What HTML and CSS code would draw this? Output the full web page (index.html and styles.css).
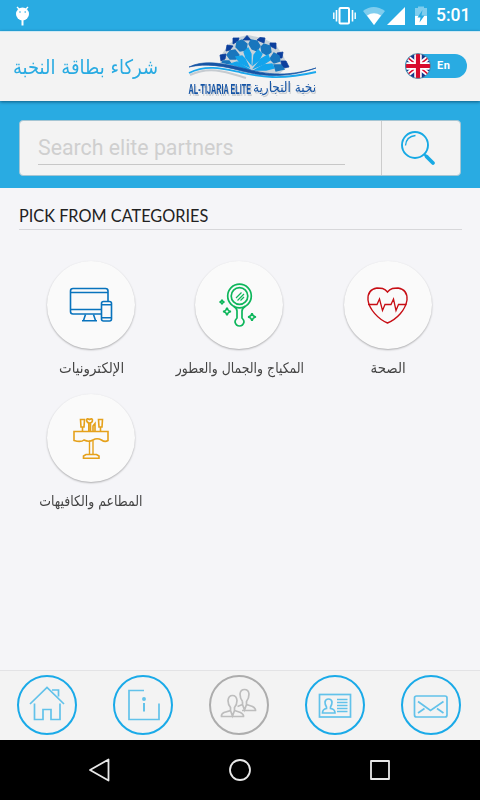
FILE: index.html
```
<!DOCTYPE html>
<html lang="en">
<head>
    <meta charset="UTF-8">
    <meta name="viewport" content="width=device-width, initial-scale=1.0">
    <title>Al-Tijaria Elite</title>
    <link rel="stylesheet" href="styles.css">
</head>
<body>
    <div class="status-bar">
        <svg class="debug-icon" width="20" height="31" viewBox="0 0 20 31">
            <path d="M4 7 L6.5 9.5 M15 7 L12.5 9.5" stroke="#fff" stroke-width="1.4"/>
            <circle cx="9.5" cy="14" r="6.5" fill="#fff"/>
            <path d="M9.5 20V25.5" stroke="#fff" stroke-width="2"/>
            <circle cx="7" cy="12" r=".8" fill="#29abe2"/>
            <circle cx="12.2" cy="12" r=".8" fill="#29abe2"/>
        </svg>
        <svg class="system-icons" width="98" height="31" viewBox="332 0 98 31">
            <g fill="none" stroke="#fff">
                <rect x="339.5" y="8" width="9.5" height="15.5" rx="1" stroke-width="2"/>
                <path d="M336.5 10V21.5M352.5 10V21.5" stroke-width="1.6"/>
                <path d="M333.8 12.5V19M355.2 12.5V19" stroke-width="1.4"/>
            </g>
            <path d="M363 11 Q373.500 3 385 11 L374 25Z" fill="#7fcdee"/>
            <path d="M367 15.500 Q374 11 381 15.500 L374 25Z" fill="#fff"/>
            <path d="M387 25 L405 7V25Z" fill="#fff"/>
            <path d="M415 8H418V6.500H424V8H427V16H415Z" fill="#7fcdee"/>
            <path d="M415 16H427V25H415Z" fill="#fff"/>
            <path d="M422.500 10L417.500 17.500H420.500L419.500 22.500L424.500 15.500H421.500Z" fill="#29abe2"/>
        </svg>
        <span class="clock">5:01</span>
    </div>

    <div class="header">
        <h1 class="title" dir="rtl" lang="ar">شركاء بطاقة النخبة</h1>
        <svg class="logo" width="134" height="69" viewBox="186 31 134 69">
            <path d="M219 65 L222 53 L229 43 L239 36 L248 34 L262 37 L275 43 L283 54 L288 66 L279 73 L250 71Z" fill="#c8d2da"/>
            <g fill="#0c3f9d" stroke="#0c3f9d" stroke-width=".8">
                <path d="M247 34.500L251 39H243Z"/>
                <path d="M233 37L239 37L238 40L233 43Z"/>
                <path d="M227 44L233 45L230 49L226 50Z"/>
                <path d="M220 54L226 53L225 58L221 60Z"/>
                <path d="M260 36.500L265 37L264 42L257 39Z"/>
                <path d="M270 42L276 42L276 48L270 45Z"/>
                <path d="M277 52L283 51L282 57L278 57Z"/>
                <path d="M281 60L286 60L289 66L282 67Z"/>
            </g>
            <g fill="#1976bd" stroke="#1976bd" stroke-width="1.300">
                <path d="M242 39L247 43L246 49L240 50L236 46L237 41Z"/>
                <path d="M251 39L257 40L260 45L257 50L252 48L249 43Z"/>
                <path d="M230 50L235 49L239 54L236 58L230 58L227 54Z"/>
                <path d="M264 43L270 45L271 51L267 54L262 51L261 46Z"/>
                <path d="M274 52L279 55L280 60L274 62L270 58Z"/>
                <path d="M223 60L229 60L232 64L228 66L221 64Z"/>
                <path d="M274 64L281 64L284 68L276 70Z"/>
            </g>
            <g fill="#13a4ec" stroke="#13a4ec" stroke-width="1.300">
                <path d="M248 47L251 53L251 63L246 57L244 51Z"/>
                <path d="M258 49L262 53L259 59L253 64L254 54Z"/>
                <path d="M236 56L242 55L245 58L249 66L240 62Z"/>
                <path d="M268 54L270 59L264 63L254 67L261 58Z"/>
                <path d="M230 63L237 61L249 68L237 68Z"/>
                <path d="M272 63L274 67L266 69L255 69L264 64Z"/>
            </g>
            <path d="M188 66C202 57 218 61 235 65S281 83 319 68V76C280 83 259 76 240 72S206 65 190 72Z" fill="#f3f3f3"/>
            <g fill="none">
                <path d="M190 74C211 64 229 72 246 77" stroke="#c6cbd0" stroke-width="2"/>
                <path d="M189 72C207 63 224 68 241 71.500S277 80 316 71" stroke="#1ba8ed" stroke-width="1.800"/>
            </g>
            <path d="M189 66C203 59 220 62 238 66S278 79 316 67C283 79 257 74 240 69.500S207 62 189 66Z" fill="#1554a5" stroke="#1554a5" stroke-width=".7"/>
            <text class="logo-latin" x="188.500" y="93" textLength="62.500" lengthAdjust="spacingAndGlyphs">AL-TIJARIA ELITE</text>
            <text class="logo-arabic" x="253" y="91" textLength="63" lengthAdjust="spacingAndGlyphs">نخبة التجارية</text>
        </svg>
        <div class="language">
            <svg class="flag" width="26" height="26" viewBox="0 0 26 26">
                <clipPath id="flag-clip"><circle cx="13" cy="13" r="12.300"/></clipPath>
                <g clip-path="url(#flag-clip)">
                    <rect width="26" height="26" fill="#17368c"/>
                    <path d="M-3 0L29 26M29 0L-3 26" stroke="#fff" stroke-width="5"/>
                    <path d="M-3 0L29 26M29 0L-3 26" stroke="#d80b2d" stroke-width="1.600"/>
                    <path d="M13 0V26M0 13H26" stroke="#fff" stroke-width="7.500"/>
                    <path d="M13 0V26M0 13H26" stroke="#d80b2d" stroke-width="4.200"/>
                </g>
                <circle cx="13" cy="13" r="12.500" fill="none" stroke="#50819b" stroke-width=".8"/>
            </svg>
            <span>En</span>
        </div>
    </div>

    <div class="search">
        <div class="search-box">
            <div class="search-field">
                <input type="text" class="search-input" placeholder="Search elite partners">
            </div>
            <button class="search-button">
                <svg width="36" height="36" viewBox="0 0 36 36" fill="none" stroke="#17a9e4">
                    <circle cx="15" cy="15" r="13" stroke-width="1.900"/>
                    <path d="M5.500 15.500C6 9.500 10 6 15.500 5.500" stroke-width="1.300"/>
                    <path d="M24 24L26.500 26.500" stroke-width="2"/>
                    <path d="M26.500 26.500L33 33" stroke-width="3.800" stroke-linecap="round"/>
                </svg>
            </button>
        </div>
    </div>

    <div class="content">
        <h2 class="section-title">PICK FROM CATEGORIES</h2>
        <div class="categories">
            <div class="category">
                <div class="circle">
                    <svg width="88" height="88" viewBox="0 0 88 88" fill="none" stroke="#0873bd" stroke-width="1.600">
                        <path d="M54 53H26Q23.500 53 23.500 50.500V30Q23.500 27.500 26 27.500H58.500Q61 27.500 61 30V40M23.500 31.500H61M23.500 48.500H54"/>
                        <path d="M38.500 53.500L36.500 59.500M46.500 53.500L48.500 59.500M35 59.700H50"/>
                        <rect x="54.500" y="40.500" width="10" height="19.500" rx="2"/>
                        <path d="M54.500 43.700H64.500M54.500 56.700H64.500"/>
                    </svg>
                </div>
                <span class="label label-electronics" dir="rtl" lang="ar">الإلكترونيات</span>
            </div>
            <div class="category">
                <div class="circle">
                    <svg width="88" height="88" viewBox="0 0 88 88" fill="none" stroke="#0db65b" stroke-width="1.700">
                        <circle cx="44.500" cy="35" r="11.800"/>
                        <circle cx="44.500" cy="35" r="8.300"/>
                        <path d="M41 37L46.500 31.500M42.500 39.500L49 33M45.500 39.500L49 36" stroke-width="1.200"/>
                        <path d="M38.500 45Q42 47.500 42 50V57Q40 59 40 61Q41 65 44.500 65T49 61Q49 59 47 57V50Q47 47.500 50.500 45"/>
                        <path d="M32 46.500Q32.500 50 36 50.500Q32.500 51 32 54.500Q31.500 51 28 50.500Q31.500 50 32 46.500Z"/>
                        <path d="M57 52Q57.500 55.500 61 56Q57.500 56.500 57 60Q56.500 56.500 53 56Q56.500 55.500 57 52Z"/>
                        <path d="M27 38.500Q27.300 40.700 29.500 41Q27.300 41.300 27 43.500Q26.700 41.300 24.500 41Q26.700 40.700 27 38.500Z"/>
                    </svg>
                </div>
                <span class="label label-beauty" dir="rtl" lang="ar">المكياج والجمال والعطور</span>
            </div>
            <div class="category">
                <div class="circle">
                    <svg width="88" height="88" viewBox="0 0 88 88" fill="none" stroke="#c70d14" stroke-width="1.400">
                        <path d="M43.500 31C40.500 27 37 27 33 27C27 28 23.500 32 24 39C25 48 34 58 43.500 62C53 58 61.500 49 63 39C63.500 32 60 28 54 27C50 27 46.500 27 43.500 31Z"/>
                        <path d="M24 43.500H33L35.500 38L38.500 49.500L41 43.500H47L49.500 38L52 49.500L54.500 43.500H62.500" stroke-width="1.300"/>
                    </svg>
                </div>
                <span class="label label-health" dir="rtl" lang="ar">الصحة</span>
            </div>
            <div class="category">
                <div class="circle">
                    <svg width="88" height="88" viewBox="0 0 88 88" fill="none" stroke="#e5a11b" stroke-width="1.600">
                        <path d="M27 37.500H61V46.500Q58 48.500 54.500 46Q50 43.500 46 46T37 46Q34 48.500 27 46.500Z"/>
                        <path d="M33.500 25.500H37.500L37 33H34ZM35.500 33V37.500M51.500 25.500H55.500L55 33H52ZM53.500 33V37.500"/>
                        <path d="M39.500 26Q40 24 42.500 25.500Q45 24 45.500 26Q45.500 29 42.500 29Q40 29 39.500 26ZM41.800 29V37.500M43.500 29V37.500M46 37V32L48 29.500V37"/>
                        <path d="M42.500 46.500V60.500M46 46.500V60.500" stroke-width="1.400"/>
                        <path d="M39 60.500H49.500L52 62V64.300H36.500V62Z"/>
                    </svg>
                </div>
                <span class="label label-food" dir="rtl" lang="ar">المطاعم والكافيهات</span>
            </div>
        </div>
    </div>

    <div class="tabs">
        <a class="tab">
            <svg width="60" height="60" viewBox="0 0 60 60">
                <path d="M13 29L30 12.500L47 29M35 15H41.500V21.500M17.500 28.500V44.500H26V34.500H34V44.500H43V28.500"/>
            </svg>
        </a>
        <a class="tab">
            <svg width="60" height="60" viewBox="0 0 60 60">
                <path d="M31 15.500H16V44.500H46V28.500"/>
                <path d="M31 28V36.500" stroke-width="2"/>
                <circle cx="31" cy="24" r="1.100" class="dot"/>
            </svg>
        </a>
        <a class="tab active">
            <svg width="60" height="60" viewBox="0 0 60 60">
                <path d="M21.500 32.500Q19 29.500 19 25.500Q19.500 20.500 23.500 20.500T28 25.500Q28 29.500 25.500 32.500V35.500L31.500 37.500Q35 39.500 34.500 41.500H12.500Q12 39 15 37.500L21.500 35.500ZM21.500 35.500L23.500 41L25.500 35.500"/>
                <path d="M33.500 26.500Q31 23.500 31 19Q31.500 14.500 35.500 14.500T40 19Q40 23.500 37.500 26.500V29.500L43.500 31.500Q47 33.500 46.500 35.500H33M28.500 31.500L33.500 29.500V26.500M33.500 29.500L35.500 35L37.500 29.500"/>
            </svg>
        </a>
        <a class="tab">
            <svg width="60" height="60" viewBox="0 0 60 60">
                <rect x="14.500" y="19.500" width="31" height="22.500"/>
                <path d="M21.500 32Q20 30 20 27Q20.500 24 23.500 24T27 27Q27 30 25.500 32V33.500Q30 34 30 38H17.500Q17.500 34 21.500 33.500Z"/>
                <path d="M32 24.500H42.500M32 27.500H42.500M32 30.500H42.500M32 33.500H42.500M32 36.500H42.500" stroke-width="1.300"/>
            </svg>
        </a>
        <a class="tab">
            <svg width="60" height="60" viewBox="0 0 60 60">
                <rect x="13.500" y="21" width="32.500" height="21" rx="2"/>
                <path d="M17 26.500L29.500 35.500L42.500 26.500M17 38L23.500 33.500M42.500 38L36 33.500"/>
            </svg>
        </a>
    </div>

    <div class="system-nav">
        <svg width="24" height="24" viewBox="0 0 24 24"><path d="M20.500 1.500V22.500L2 12Z"/></svg>
        <svg width="24" height="24" viewBox="0 0 24 24"><circle cx="12" cy="12" r="10"/></svg>
        <svg width="24" height="24" viewBox="0 0 24 24"><rect x="3" y="3" width="18" height="18"/></svg>
    </div>
</body>
</html>
```
FILE: styles.css
```
* { box-sizing: border-box; }
body { margin: 0; height: 800px; display: flex; flex-direction: column; overflow: hidden; font-family: Roboto, "DejaVu Sans", sans-serif; background-color: #f5f5f8; }
svg { display: block; flex: none; }
.status-bar { height: 31px; display: flex; align-items: center; padding: 0 11px 0 13px; background-color: #29abe2; color: white; }
.system-icons { margin-left: auto; }
.clock { width: 33px; margin-left: 6px; font-size: 17.5px; font-weight: 500; line-height: 33px; white-space: nowrap; }
.header { height: 70px; display: flex; align-items: center; padding: 0 13px; background-color: #f3f3f3; border-top: 1px solid #cfe9f4; box-shadow: 0 1px 3px rgba(0, 50, 80, 0.65); z-index: 1; }
.title { width: 145px; margin: 0; font-family: "DejaVu Sans", sans-serif; font-size: 18px; font-weight: normal; line-height: 30px; color: #29abe2; white-space: nowrap; transform: scaleY(1.12); }
.logo { margin-left: 28px; }
.logo-latin { font-family: "Liberation Sans", sans-serif; font-size: 15.5px; font-weight: bold; fill: #1554a5; filter: drop-shadow(1px 2px 0 #c9cdd1); }
.logo-arabic { font-family: "DejaVu Sans", sans-serif; font-size: 14px; fill: #1554a5; filter: drop-shadow(1px 2px 0 #c9cdd1); }
.language { width: 62px; height: 24px; margin: 0 0 2px auto; display: flex; align-items: center; border-radius: 12px; background-color: #29abe2; color: white; font-size: 11px; font-weight: bold; letter-spacing: 0.6px; }
.flag { margin-right: 6px; }
.search { height: 87px; flex: none; padding: 19px 19px; background-color: #29abe2; }
.search-box { height: 56px; display: flex; border: 1px solid #a5c5d3; border-radius: 4px; background-color: #f3f3f3; }
.search-field { flex: 1; padding: 9px 36px 0 18px; }
.search-input { display: block; width: 100%; height: 35px; padding: 0; border: none; border-bottom: 1px solid #c7c7c7; outline: none; background: none; font-family: Roboto, sans-serif; font-size: 21.3px; }
.search-input::placeholder { color: #cfcfcf; opacity: 1; }
.search-button { width: 79px; display: flex; justify-content: center; align-items: center; padding: 0 7px 1px 0; border: none; border-left: 1px solid #cccccc; background: none; }
.content { flex: 1; padding: 18px 18px 0 19px; }
.section-title { height: 24px; margin: 0; border-bottom: 1px solid #d7d7da; color: #222; font-family: Lato, sans-serif; font-size: 16.3px; font-weight: normal; line-height: 20px; }
.categories { display: grid; grid-template-columns: repeat(3, 148.300px); grid-auto-rows: 132.500px; margin: 31px 0 0 -2px; }
.category { display: flex; flex-direction: column; align-items: center; }
.circle { width: 88px; height: 88px; border-radius: 50%; background-color: #fafafa; box-shadow: 0 1px 2px rgba(0, 0, 0, 0.3); }
.label { margin-top: 9px; font-family: "DejaVu Sans", sans-serif; font-size: 13px; line-height: 22px; color: #444; white-space: nowrap; transform: scale(0.96, 1.12); }
.label-electronics, .label-health { transform: scale(1.03, 1.12); }
.tabs { height: 70px; display: grid; grid-template-columns: repeat(5, 96px); justify-items: center; align-items: center; background-color: #f3f3f3; border-top: 1px solid #e3e3e5; }
.tab { width: 60px; height: 60px; margin: 0 2px 1px 0; border: 2px solid #1aaae8; border-radius: 50%; }
.tab svg { margin: -2px; fill: none; stroke: #62c2ea; stroke-width: 1.7; }
.tab .dot { fill: #62c2ea; }
.tab.active { border-color: #adadad; }
.tab.active svg { stroke: #bdbdbd; }
.system-nav { height: 60px; display: flex; justify-content: center; align-items: center; gap: 116px; background-color: black; }
.system-nav svg { fill: none; stroke: #e8e8e8; stroke-width: 1.8; stroke-linejoin: round; }
```
